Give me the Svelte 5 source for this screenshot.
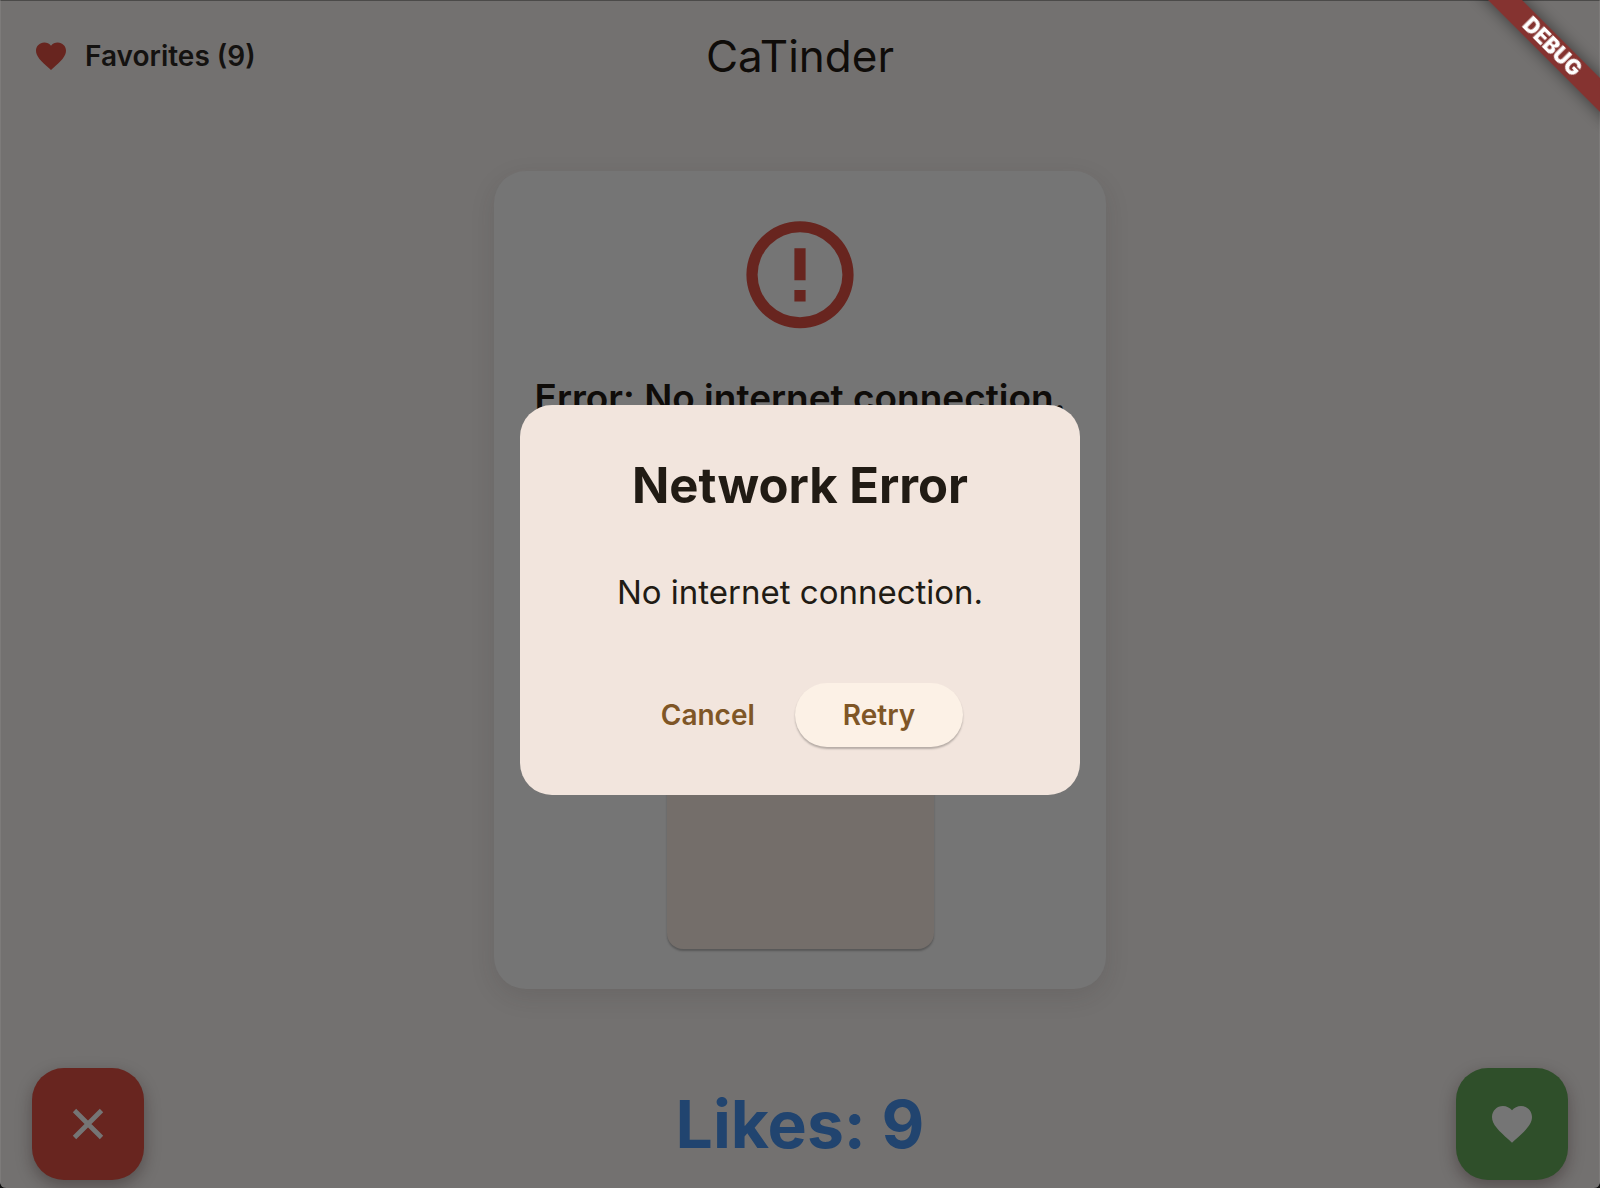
<script>
  let likes = $state(9);
  let open = $state(true);
  const message = 'No internet connection.';
</script>

{#snippet heart()}
  <path d="M12 21.35l-1.45-1.32C5.4 15.36 2 12.28 2 8.5 2 5.42 4.42 3 7.5 3c1.74 0 3.41.81 4.5 2.09C13.09 3.81 14.76 3 16.5 3 19.58 3 22 5.42 22 8.5c0 3.78-3.4 6.86-8.55 11.54L12 21.35z" />
{/snippet}

<div class="app">
  <header>
    <button class="favorites">
      <svg viewBox="0 0 24 24" aria-hidden="true">{@render heart()}</svg>
      <span>Favorites ({likes})</span>
    </button>
    <h1>CaTinder</h1>
  </header>

  <main>
    <section class="card">
      <svg class="alert" viewBox="0 0 24 24" aria-hidden="true">
        <path d="M10.95 14.8h2.1v2.15h-2.1zm0-7.8h2.1v6h-2.1zM12 1.9A10.05 10.05 0 1 0 12 22 10.05 10.05 0 0 0 12 1.9zM12 19.9A7.95 7.95 0 1 1 12 4a7.95 7.95 0 0 1 0 15.9z" />
      </svg>
      <p>Error: {message}</p>
      <div class="panel"></div>
    </section>
  </main>

  <footer>
    <button class="fab dislike" aria-label="Dislike">
      <svg class="cross" viewBox="0 0 24 24" aria-hidden="true">
        <path d="M6.1 6.1l11.8 11.8M17.9 6.1L6.1 17.9" />
      </svg>
    </button>
    <strong>Likes: {likes}</strong>
    <button class="fab like" aria-label="Like" onclick={() => likes++}>
      <svg viewBox="0 0 24 24" aria-hidden="true">{@render heart()}</svg>
    </button>
  </footer>
</div>

{#if open}
  <div class="overlay">
    <div class="dialog" role="alertdialog" aria-modal="true" aria-labelledby="dialog-title" aria-describedby="dialog-text">
      <h2 id="dialog-title">Network Error</h2>
      <p id="dialog-text">{message}</p>
      <div class="actions">
        <button onclick={() => (open = false)}>Cancel</button>
        <button class="retry">Retry</button>
      </div>
    </div>
  </div>
{/if}

<div class="corner" aria-hidden="true"><span>DEBUG</span></div>

<style>
  :global(body) {
    background: #111;
    font-family: Inter, 'Liberation Sans', sans-serif;
  }

  h1, h2, p {
    margin: 0;
  }

  button {
    border: 0;
    background: none;
    font: inherit;
    cursor: pointer;
  }

  svg {
    display: block;
    fill: currentColor;
  }

  .app {
    display: flex;
    flex-direction: column;
    box-sizing: border-box;
    min-height: 100vh;
    background: #737170;
    border-top: 1px solid #4b4a49;
    border-left: 1px solid #7d7b7a;
    border-right: 1px solid #7d7b7a;
    border-radius: 0 0 6px 6px;
    color: #0f0c09;
  }

  header {
    display: grid;
    grid-template-columns: 1fr auto 1fr;
    align-items: center;
    height: 110px;
    padding: 0 32px;
  }

  h1 {
    font-size: 44px;
    font-weight: 400;
    line-height: 56px;
  }

  .favorites {
    display: flex;
    align-items: center;
    justify-self: start;
    gap: 16px;
    padding: 0;
    color: #141210;
    font-size: 28px;
    font-weight: 600;
    line-height: 40px;
  }

  .favorites svg {
    width: 36px;
    height: 36px;
    color: #68251f;
  }

  main {
    display: flex;
    flex: 1;
    justify-content: center;
    padding: 60px 32px 79px;
  }

  .card {
    display: flex;
    flex-direction: column;
    align-items: center;
    box-sizing: border-box;
    width: 612px;
    padding: 40px;
    border-radius: 32px;
    background: #757575;
    box-shadow: 0 8px 24px rgba(50, 40, 35, 0.13);
  }

  .alert {
    width: 128px;
    height: 128px;
    color: #68251f;
  }

  .card p {
    margin-top: 35px;
    font-size: 37px;
    font-weight: 600;
    line-height: 48px;
    white-space: nowrap;
  }

  .panel {
    flex: 1;
    width: 267px;
    margin-top: 48px;
    border-radius: 16px;
    background: #746e6a;
    box-shadow: 0 2px 2px rgba(0, 0, 0, 0.25);
  }

  footer {
    display: flex;
    align-items: center;
    justify-content: space-between;
    padding: 0 31px 8px;
  }

  footer strong {
    color: #21446f;
    font-size: 66px;
    font-weight: 700;
    line-height: 80px;
  }

  .fab {
    display: grid;
    place-items: center;
    width: 112px;
    height: 112px;
    border-radius: 32px;
    color: #757575;
    box-shadow: 0 6px 16px rgba(30, 15, 15, 0.35);
  }

  .fab svg {
    width: 48px;
    height: 48px;
  }

  .cross {
    fill: none;
    stroke: currentColor;
    stroke-width: 2.4;
    stroke-linecap: square;
    stroke-linejoin: round;
  }

  .dislike {
    background: #68251f;
  }

  .like {
    background: #2f4f2a;
  }

  .overlay {
    position: fixed;
    inset: 0;
    display: grid;
    place-items: center;
    padding-top: 12px;
  }

  .dialog {
    box-sizing: border-box;
    width: 560px;
    padding: 48px;
    border-radius: 32px;
    background: #f2e5dd;
    color: #211b14;
    text-align: center;
  }

  h2 {
    font-size: 49px;
    font-weight: 700;
    line-height: 66px;
  }

  .dialog p {
    margin: 53px 0 71px;
    font-size: 33px;
    line-height: 40px;
  }

  .actions {
    display: flex;
    justify-content: center;
    gap: 16px;
  }

  .actions button {
    height: 64px;
    padding: 0 24px;
    border-radius: 32px;
    color: #7f5626;
    font-size: 28px;
    font-weight: 600;
  }

  .actions .retry {
    padding: 0 48px;
    background: #fcf1e6;
    box-shadow: 0 2px 2px rgba(0, 0, 0, 0.25);
  }

  .corner {
    position: fixed;
    top: 0;
    right: 0;
    width: 160px;
    height: 160px;
    overflow: hidden;
  }

  .corner span {
    position: absolute;
    top: 35px;
    left: 12px;
    width: 200px;
    transform: rotate(45deg);
    background: #853330;
    box-shadow: 0 0 16px rgba(0, 0, 0, 0.5);
    color: #fff;
    font-size: 21px;
    font-weight: 900;
    line-height: 24px;
    text-align: center;
  }
</style>
